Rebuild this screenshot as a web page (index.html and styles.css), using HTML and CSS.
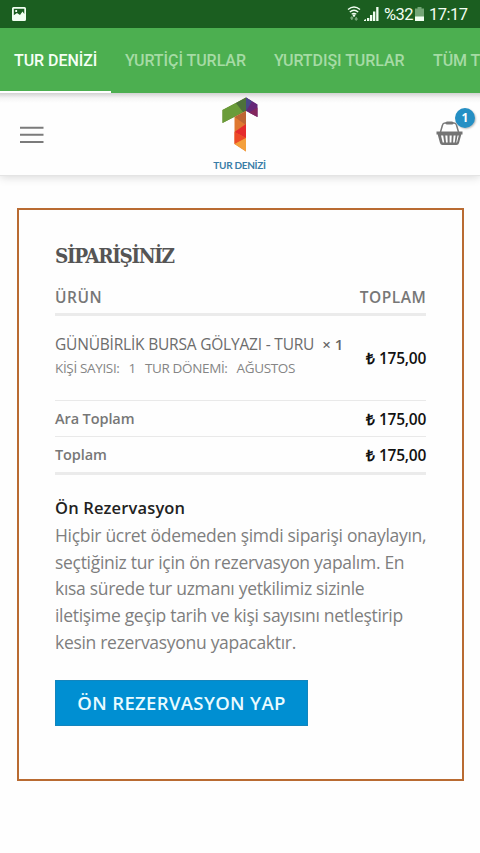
FILE: index.html
```html
<!DOCTYPE html>
<html lang="tr">
<head>
<meta charset="utf-8">
<meta name="viewport" content="width=device-width, initial-scale=1">
<title>Tur Denizi</title>
<link rel="stylesheet" href="styles.css">
</head>
<body>
<div class="status">
  <svg class="status-photo" width="14" height="14" viewBox="0 0 14 14"><path fill="#f2fff2" fill-rule="evenodd" d="M1.500 0h11Q14 0 14 1.500v11Q14 14 12.500 14h-11Q0 14 0 12.500v-11Q0 0 1.500 0ZM1.800 1.800v6.500L5 6l3 2 2.500-3.500L12.300 7V1.800ZM3.300 3h1.800v2H3.300Z"/></svg>
  <div class="status-right">
    <svg class="wifi" width="14" height="15" viewBox="0 0 14 15" fill="none" stroke="#f2fff2" stroke-width="1.400"><path d="M1 3.500Q7-1.500 13 3.500M2.800 6Q7 2.500 11.200 6M4.700 8.300Q7 6.500 9.300 8.300"/><circle cx="7" cy="9.500" r=".6" fill="#f2fff2"/><path stroke="#73a575" d="M4.800 14v-3M3.500 12.400l1.300-1.400 1.300 1.400M9.200 11v3M7.900 12.600L9.200 14l1.300-1.400"/></svg>
    <svg class="signal" width="15" height="14" viewBox="0 0 15 14" fill="#f2fff2"><path d="M0 14v-1l2-1v2zM3 11h2.300v3H3zM6 8h2.300v6H6zM9 4.500h2.300V14H9zM12.200 0h2.300v14h-2.300z"/></svg>
    <span class="percent">%32</span>
    <svg class="battery" width="9" height="14" viewBox="0 0 9 14"><path fill="#73a575" d="M2.500 0h4v1.500H9V14H0V1.500h2.500z"/><path fill="#f2fff2" d="M0 9.500h9V14H0z"/></svg>
    <span class="clock">17:17</span>
  </div>
</div>
<nav class="tabs">
  <a class="tab tab-active">TUR DENİZİ</a>
  <a class="tab tab-domestic">YURTİÇİ TURLAR</a>
  <a class="tab tab-abroad">YURTDIŞI TURLAR</a>
  <a class="tab tab-all">TÜM TURLAR</a>
</nav>
<header class="header">
  <svg class="menu" width="24" height="18" viewBox="0 0 24 18"><path stroke="#7b7b7b" stroke-width="2" d="M0 1.700h23.500M0 8.800h23.500M0 16h23.500"/></svg>
  <div class="logo">
    <svg width="36" height="55" viewBox="0 0 36 55">
      <path fill="#66852f" d="M.5 13L24 .5V14L.5 26z"/>
      <path fill="#6a9c39" d="M.5 13L14 6l7 9L.5 26z"/>
      <path fill="#4d713a" d="M14 6L24 .5V14l-3 1z"/>
      <path fill="#424e8c" d="M24 .5L35.500 8 24 14z"/>
      <path fill="#662779" d="M24 .5l11.500 7V20L24 14z"/>
      <path fill="#494789" d="M24 .5l6 4L24 14z"/>
      <path fill="#84275e" d="M27 15.500l8.500-5V20z"/>
      <path fill="#df7830" d="M12.500 20L24 14v40.500L12.500 47z"/>
      <path fill="#bd6534" d="M12.500 20L24 14v14z"/>
      <path fill="#e52b2c" d="M24 27v14L12.500 35z"/>
      <path fill="#ed4a27" d="M12.500 35L24 41l-11.500 6z"/>
      <path fill="#f4a03c" d="M12.500 47L24 41v13.500z"/>
    </svg>
    <span class="logo-name">TUR DENİZİ</span>
  </div>
  <div class="cart">
    <svg width="27" height="25" viewBox="0 0 27 25"><path fill="none" stroke="#777" stroke-width="1.500" d="M4.500 11L6.500 4q.5-2 2.500-2h9q2 0 2.500 2l2 7"/><rect x="9.500" y=".4" width="8" height="3.200" rx="1.500" fill="#777"/><path fill="#747474" fill-rule="evenodd" d="M.5 10.500h26v3h-1.200L23 22q-.5 2-2.500 2h-14Q4.500 24 4 22L1.700 13.500H.5zM5 14.500l1.700 7h1.500l-1-7zm4.300 0l.7 7h1.700l-.3-7zm4.300 0v7h1.800l.3-7zm4 0l-.5 7h1.600l.9-7zm3.900 0l-1.200 7h.7l1.800-7z"/></svg>
    <span class="badge">1</span>
  </div>
</header>
<main class="order">
  <h1 class="title"><span>SİPARİŞİNİZ</span></h1>
  <div class="row head"><span class="head-product">ÜRÜN</span><span class="head-total">TOPLAM</span></div>
  <div class="row item">
    <div class="product">
      <div class="product-name"><span class="name-text">GÜNÜBİRLİK BURSA GÖLYAZI - TURU</span><b class="qty">× 1</b></div>
      <div class="meta"><span>KİŞİ SAYISI:</span><span>1</span><span>TUR DÖNEMİ:</span><span>AĞUSTOS</span></div>
    </div>
    <span class="price">₺ 175,00</span>
  </div>
  <div class="row sum"><span class="label">Ara Toplam</span><span class="price">₺ 175,00</span></div>
  <div class="row sum last"><span class="label">Toplam</span><span class="price">₺ 175,00</span></div>
  <h2 class="payment">Ön Rezervasyon</h2>
  <p class="description">Hiçbir ücret ödemeden şimdi siparişi onaylayın,<br>seçtiğiniz tur için ön rezervasyon yapalım. En<br>kısa sürede tur uzmanı yetkilimiz sizinle<br>iletişime geçip tarih ve kişi sayısını netleştirip<br>kesin rezervasyonu yapacaktır.</p>
  <button class="submit">ÖN REZERVASYON YAP</button>
</main>
</body>
</html>
```
FILE: styles.css
```css
* { box-sizing: border-box; }
body { margin: 0; height: 853px; overflow: hidden; background: #fefefe; font-family: "Open Sans", sans-serif; color: #777; white-space: nowrap; }
svg { display: block; flex: none; }
.status { height: 28px; background: #1b5e20; display: flex; justify-content: space-between; padding: 0 13px 0 12px; font: 17px/28px Roboto, sans-serif; color: #f2fff2; }
.status-photo { margin-top: 7px; }
.status-right { display: flex; }
.wifi { margin-top: 6px; margin-left: -1px; }
.signal { margin: 7px 5px 0 3px; }
.percent { width: 29px; font-size: 16.500px; letter-spacing: -.6px; padding-top: 1px; }
.battery { margin: 7px 5px 0 2px; }
.clock { width: 38px; font-size: 16.500px; letter-spacing: -.5px; padding-top: 1px; }
.tabs { height: 65px; display: flex; overflow: hidden; background: #4caf50; position: relative; z-index: 2; font: 500 16px/65px Roboto, sans-serif; color: #a6dba5; }
.tab { flex: none; padding: 0 14px; letter-spacing: -.05px; }
.tab-active { width: 111px; color: #f5fff5; border-bottom: 2px solid #fff; }
.tab-domestic { width: 149px; }
.tab-abroad { width: 159px; }
.header { height: 83px; padding: 0 15px 0 20px; display: grid; grid-template-columns: 1fr 50px 1fr; background: linear-gradient(#d2d2d2, #f5f5f5 5px, #fefefe 10px); box-shadow: 0 1px 9px rgba(0,0,0,.16); border-bottom: 1px solid #e4e4e4; }
.menu { margin-top: 33px; }
.logo { display: flex; flex-direction: column; align-items: center; padding-top: 4px; margin-left: -3px; margin-right: 3px; }
.logo-name { font: 700 10px/14px Lato, sans-serif; color: #397da7; margin-top: 6px; letter-spacing: -.3px; }
.cart { position: relative; justify-self: end; margin: 28px 2px 0 0; }
.badge { position: absolute; left: 19px; top: -13px; width: 20px; height: 20px; border-radius: 50%; background: #258fc4; box-shadow: 1px 1px 2px #bbb; color: #fff; font-size: 12px; font-weight: 700; line-height: 19px; text-align: center; }
.order { margin: 32px 16px 0 17px; height: 573px; border: 2px solid #b96b32; padding: 31px 36px 0; }
.title { height: 32px; margin: 0; font: 700 20.500px/30px "DejaVu Serif Condensed", "DejaVu Serif", serif; font-stretch: condensed; letter-spacing: -1.350px; color: #555; }
.row { display: flex; justify-content: space-between; width: 371px; }
.head { height: 43px; border-bottom: 3px solid #ebebeb; font-weight: 600; font-size: 15.500px; line-height: 49px; letter-spacing: .5px; }
.head-total { margin-right: -.3px; }
.item { height: 85px; border-bottom: 1px solid #e9e9e9; align-items: center; }
.product { height: 85px; padding-top: 15px; }
.product-name { display: flex; font-size: 15.500px; line-height: 26px; color: #6c6c6c; gap: 8px; letter-spacing: -.2px; }
.qty { font-size: 15px; font-weight: 600; color: #666; letter-spacing: 0; }
.meta { display: flex; gap: 9px; font-size: 13.500px; letter-spacing: -.35px; line-height: 23px; color: #858585; }
.price { font-size: 15.500px; letter-spacing: -.25px; font-weight: 600; color: #111; }
.sum { height: 36px; border-bottom: 1px solid #e9e9e9; align-items: center; font-size: 14.500px; letter-spacing: -.1px; font-weight: 600; }
.last { height: 38px; border-bottom: 3px solid #ebebeb; }
.payment { margin: 19px 0 0; font-size: 16.500px; letter-spacing: .15px; line-height: 28px; font-weight: 600; color: #222; }
.description { margin: 0; font-size: 17.500px; letter-spacing: -.3px; line-height: 26.700px; color: #7e7e7e; }
.submit { display: block; margin: 24px 0 0; width: 253px; height: 46px; border: 1px solid #1385bd; background: #008fd2; color: #e9fbff; font: 600 18.500px/42px "Open Sans", sans-serif; letter-spacing: .35px; padding: 0; }
```
